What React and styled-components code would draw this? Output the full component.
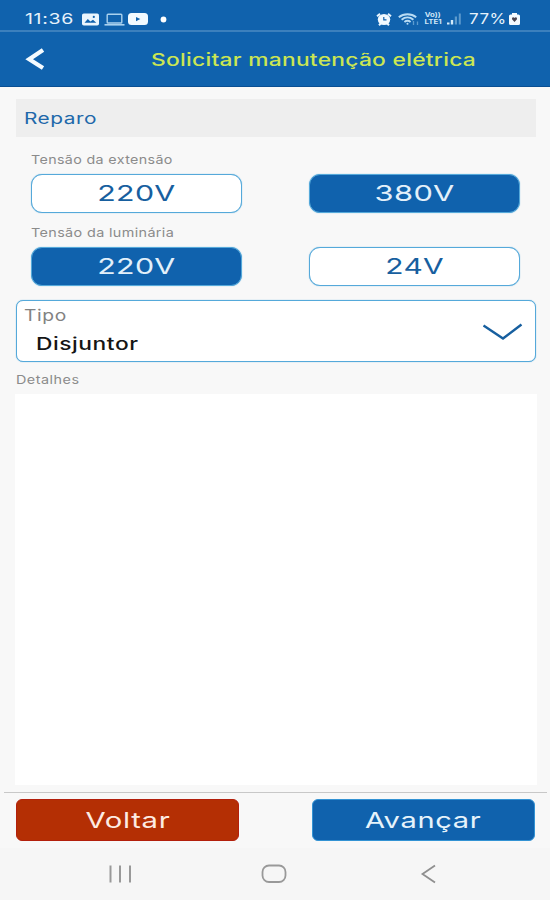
import React from "react";
import styled, { createGlobalStyle } from "styled-components";

const blue = "#1062ad";
const edge = "#55a9da";

const GlobalStyle = createGlobalStyle`
  * { box-sizing: border-box; }
  body { margin: 0; background: #f7f7f7; }
  button { font: inherit; }
`;

const Screen = styled.div`
  width: 550px;
  height: 900px;
  display: flex;
  flex-direction: column;
  background: #f8f8f8;
  font-family: Inter, "Open Sans", sans-serif;
  overflow: hidden;
`;

/* Extended lettering: the glyphs are widened horizontally. */
const Wide = styled.span`
  display: inline-block;
  white-space: nowrap;
  transform: scaleX(${(p) => p.$x});
  transform-origin: ${(p) => p.$from || "left"} center;
  letter-spacing: ${(p) => p.$gap ?? 0.4}px;
`;

const StatusBar = styled.div`
  height: 32px;
  flex: none;
  display: flex;
  justify-content: space-between;
  padding: 7px 30px 0 25px;
  background: ${blue};
  border-bottom: 2px solid #3c80bd;
  color: #e6f2fb;
  font-size: 15px;
  line-height: 24px;
`;

const StatusGroup = styled.div`
  display: flex;
  align-items: center;
  height: 24px;
`;

const Clock = styled.div`
  width: 56px;
`;

const Percent = styled.div`
  width: 40px;
  margin-left: 7px;
`;

const Header = styled.header`
  height: 55px;
  flex: none;
  display: flex;
  align-items: center;
  padding-left: 24px;
  background: ${blue};
  border-bottom: 1px solid #0a4f93;
`;

const BackButton = styled.button`
  width: 127px;
  height: 28px;
  padding: 0;
  border: 0;
  background: none;
  text-align: left;
  line-height: 0;
`;

const Title = styled.h1`
  margin: 2px 0 0;
  color: #cbe653;
  font-size: 17px;
  font-weight: 500;
  line-height: 22px;
`;

const Body = styled.main`
  flex: none;
  height: 705px;
  display: flex;
  flex-direction: column;
  padding: 12px 14px 0 16px;
`;

const SectionTitle = styled.h2`
  margin: 0;
  height: 38px;
  flex: none;
  padding-left: 8px;
  background: #eeeeee;
  color: #2068aa;
  font-size: 16px;
  font-weight: 400;
  line-height: 38px;
`;

const Label = styled.div`
  height: 14px;
  flex: none;
  margin: ${(p) => p.$margin};
  color: #8b8b8b;
  font-size: ${(p) => p.$size || 12}px;
  line-height: 14px;
`;

const Options = styled.div`
  display: flex;
  justify-content: space-between;
  flex: none;
  padding: 0 16px 0 15px;
`;

const Option = styled.button`
  width: 211px;
  height: 39px;
  padding: 0;
  border: 1px solid ${edge};
  border-radius: 11px;
  box-shadow: 0 0 1px ${edge};
  background: ${(p) => (p.$selected ? blue : "#fff")};
  color: ${(p) => (p.$selected ? "#e3f0fa" : "#175f9f")};
  font-size: 22px;
  line-height: 37px;
  text-align: center;
`;

const Select = styled.div`
  height: 62px;
  flex: none;
  margin-top: 14px;
  display: flex;
  align-items: center;
  justify-content: space-between;
  padding: 0 12px 0 7px;
  border: 1px solid ${edge};
  border-radius: 7px;
  box-shadow: 0 0 1px ${edge};
  background: #fff;
`;

const SelectText = styled.div`
  display: flex;
  flex-direction: column;
  height: 60px;
`;

const SelectLabel = styled.div`
  margin-top: 4px;
  color: #828282;
  font-size: 15.5px;
  line-height: 22px;
`;

const SelectValue = styled.div`
  margin: 6px 0 0 12px;
  color: #151515;
  font-size: 17px;
  font-weight: 500;
  line-height: 22px;
`;

const Details = styled.textarea`
  display: block;
  flex: none;
  width: 522px;
  height: 391px;
  margin-left: -1px;
  border: 0;
  resize: none;
  background: #fff;
`;

const Footer = styled.footer`
  height: 56px;
  flex: none;
  margin: 0 3px 0 4px;
  display: flex;
  justify-content: space-between;
  padding: 6px 12px 0;
  border-top: 1px solid #c8c8c8;
`;

const Action = styled.button`
  width: 223px;
  height: 42px;
  padding: 0;
  border: 1px solid ${(p) => (p.$danger ? "#b3200c" : "#3393d4")};
  border-radius: 6px;
  background: ${(p) => (p.$danger ? "#b42f04" : blue)};
  color: ${(p) => (p.$danger ? "#fdebe2" : "#e6f3fb")};
  font-size: 22px;
  line-height: 40px;
  text-align: center;
`;

const NavBar = styled.nav`
  flex: 1;
  display: flex;
  align-items: center;
  padding: 0 112px 0 107px;
  background: #f6f6f6;
`;

const Icon = styled.svg`
  display: block;
  flex: none;
  margin-left: ${(p) => p.$ml || 0}px;
`;

const ImageIcon = () => (
  <Icon $ml={1} width="17" height="13" viewBox="0 0 17 13">
    <rect x="0" y="0.5" width="17" height="12" rx="1.8" fill="#eaf5fd" />
    <path d="M2.5 9.8 5.8 6l2.6 2.6L11 6.8l3.3 3z" fill={blue} />
    <circle cx="11.8" cy="3.9" r="1.1" fill={blue} />
  </Icon>
);

const LaptopIcon = () => (
  <Icon $ml={5} width="21" height="13" viewBox="0 0 21 13" fill="none" stroke="#a9d1ee">
    <rect x="3.2" y="1.2" width="14.6" height="8.8" rx="0.8" strokeWidth="1.4" />
    <path d="M0.5 11.8h20" strokeWidth="1.6" />
  </Icon>
);

const VideoIcon = () => (
  <Icon $ml={3} width="20" height="12" viewBox="0 0 20 12">
    <rect width="20" height="12" rx="3.5" fill="#f2faff" />
    <path d="M8 3.9v4.4L12.3 6z" fill={blue} />
  </Icon>
);

const DotIcon = () => (
  <Icon $ml={12} width="7" height="7" viewBox="0 0 7 7">
    <circle cx="3.5" cy="3.5" r="2.9" fill="#fff" />
  </Icon>
);

const AlarmIcon = () => (
  <Icon width="16" height="13" viewBox="0 0 16 13">
    <path d="M1 3.2 4 .9M15 3.2 12 .9M3 12.2l2-2M13 12.2l-2-2" stroke="#e8f4fc" strokeWidth="2" />
    <ellipse cx="8" cy="6.5" rx="6.2" ry="5.6" fill="#f1f9ff" />
    <path d="M7.8 3.9v3h2.7" fill="none" stroke={blue} strokeWidth="1.2" />
  </Icon>
);

const WifiIcon = () => (
  <Icon $ml={6} width="22" height="13" viewBox="0 0 22 13" fill="none" stroke="#b9dcf4" strokeWidth="2">
    <path d="M.8 4.2c5-4 12.4-4 17.4 0M3.6 6.7c3.500-2.800 8.300-2.800 11.800 0M6.400 9c2-1.500 4.200-1.500 6.200 0" />
    <circle cx="9.5" cy="10.8" r="1" fill="#b9dcf4" stroke="none" />
    <path d="M15.5 8v4M19.5 8.5v3.500" strokeWidth="1.3" stroke="#5c9bcf" />
  </Icon>
);

const Volte = styled.div`
  width: 22px;
  margin-left: 2px;
  display: flex;
  flex-direction: column;
  align-items: center;
  color: #d0e7f7;
  font-size: 6.5px;
  font-weight: 700;
  line-height: 7px;
`;

const VolteLine = styled.div`
  height: 7px;
`;

const SignalIcon = () => (
  <Icon $ml={3} width="15" height="12" viewBox="0 0 15 12">
    <path d="M0 9.5h2.500v2H0zM3.800 7h2.400v4.500H3.800z" fill="#d3eafa" />
    <path d="M7.800 3.500H10v8H7.800zM11.800.5h2v11h-2z" fill="#5c99cc" />
  </Icon>
);

const BatteryIcon = () => (
  <Icon width="11" height="12" viewBox="0 0 11 12">
    <path d="M3 0h5v1.500h1.500q1.500 0 1.500 1.500v7.500q0 1.500-1.500 1.500h-8Q0 12 0 10.500V3q0-1.500 1.500-1.500H3z" fill="#f4faff" />
    <path d="M5.500 9 3 6.200q-.4-1.900 1.200-1.900.8 0 1.300.8.500-.8 1.300-.8Q8.400 4.300 8 6.200z" fill="#4a4450" />
  </Icon>
);

const BackIcon = () => (
  <Icon width="24" height="28" viewBox="0 0 24 28">
    <path d="M19 5 5.200 14.200 19 23" fill="none" stroke="#f4fbff" strokeWidth="4.200" />
  </Icon>
);

const ChevronIcon = () => (
  <Icon width="41" height="22" viewBox="0 0 41 22">
    <path d="M1.500 5.500 21 18.500 39.500 4.500" fill="none" stroke="#175f9f" strokeWidth="2.400" />
  </Icon>
);

const RecentsIcon = () => (
  <Icon width="26" height="20" viewBox="0 0 26 20">
    <path d="M3.500 1.500v17M13 1.500v17M23 1.500v17" stroke="#999" strokeWidth="2" />
  </Icon>
);

const HomeIcon = () => (
  <Icon $ml={128} width="26" height="20" viewBox="0 0 26 20">
    <rect x="1.500" y="1.500" width="23" height="16.500" rx="6.500" fill="none" stroke="#999" strokeWidth="1.800" />
  </Icon>
);

const NavBackIcon = () => (
  <Icon $ml={133} width="18" height="20" viewBox="0 0 18 20">
    <path d="M15 1.500 2.500 10 15 18.500" fill="none" stroke="#8f8f8f" strokeWidth="1.800" />
  </Icon>
);

export default function App() {
  return (
    <Screen>
      <GlobalStyle />
      <StatusBar>
        <StatusGroup>
          <Clock><Wide $x={1.3} $gap={0.5}>11:36</Wide></Clock>
          <ImageIcon />
          <LaptopIcon />
          <VideoIcon />
          <DotIcon />
        </StatusGroup>
        <StatusGroup>
          <AlarmIcon />
          <WifiIcon />
          <Volte>
            <VolteLine><Wide $x={1.2} $gap={0} $from="center">Vo))</Wide></VolteLine>
            <VolteLine><Wide $x={1.2} $gap={0} $from="center">LTE1</Wide></VolteLine>
          </Volte>
          <SignalIcon />
          <Percent><Wide $x={1.13}>77%</Wide></Percent>
          <BatteryIcon />
        </StatusGroup>
      </StatusBar>

      <Header>
        <BackButton aria-label="Voltar"><BackIcon /></BackButton>
        <Title><Wide $x={1.34} $gap={0.2}>Solicitar manutenção elétrica</Wide></Title>
      </Header>

      <Body>
        <SectionTitle><Wide $x={1.3} $gap={0.4}>Reparo</Wide></SectionTitle>

        <Label $margin="16px 0 7px 15px"><Wide $x={1.19} $gap={0.3}>Tensão da extensão</Wide></Label>
        <Options>
          <Option><Wide $x={1.38} $gap={0.3} $from="center">220V</Wide></Option>
          <Option $selected><Wide $x={1.4} $gap={0.3} $from="center">380V</Wide></Option>
        </Options>

        <Label $margin="13px 0 7px 15px"><Wide $x={1.2} $gap={0.3}>Tensão da luminária</Wide></Label>
        <Options>
          <Option $selected><Wide $x={1.38} $gap={0.3} $from="center">220V</Wide></Option>
          <Option><Wide $x={1.36} $gap={0.3} $from="center">24V</Wide></Option>
        </Options>

        <Select role="combobox">
          <SelectText>
            <SelectLabel><Wide $x={1.24} $gap={0.5}>Tipo</Wide></SelectLabel>
            <SelectValue><Wide $x={1.34} $gap={0.4}>Disjuntor</Wide></SelectValue>
          </SelectText>
          <ChevronIcon />
        </Select>

        <Label $size={11.5} $margin="11px 0 7px 0"><Wide $x={1.25}>Detalhes</Wide></Label>
        <Details aria-label="Detalhes" />
      </Body>

      <Footer>
        <Action $danger><Wide $x={1.33} $gap={0.5} $from="center">Voltar</Wide></Action>
        <Action><Wide $x={1.32} $gap={0.5} $from="center">Avançar</Wide></Action>
      </Footer>

      <NavBar>
        <RecentsIcon />
        <HomeIcon />
        <NavBackIcon />
      </NavBar>
    </Screen>
  );
}
